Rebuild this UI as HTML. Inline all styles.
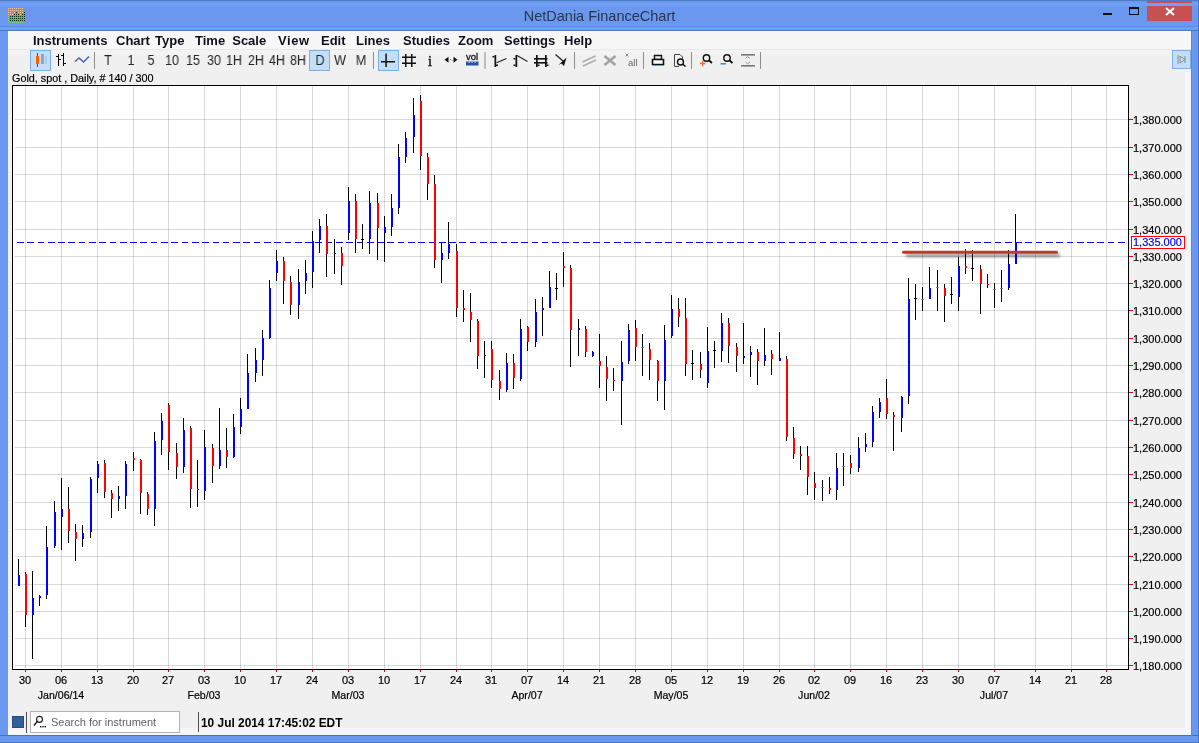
<!DOCTYPE html>
<html><head><meta charset="utf-8">
<style>
*{margin:0;padding:0;box-sizing:border-box}
html,body{width:1199px;height:743px;overflow:hidden;background:#6a98ee;font-family:"Liberation Sans",sans-serif;position:relative}
.abs{position:absolute}
#ttl,.mi,.tb,#info,.dl,.ml,.pl,.st{will-change:transform}
#info,.dl,.ml,.pl{-webkit-text-stroke-width:0.2px}
#ttl{position:absolute;left:0;width:1199px;top:8px;text-align:center;font-size:14.5px;color:#2a3550;white-space:nowrap}
.mi{position:absolute;top:32.5px;font-size:13px;font-weight:bold;color:#10101c;white-space:nowrap}
.tb{position:absolute;top:51.5px;font-size:14px;color:#262626;white-space:nowrap;transform:translateX(-50%) scaleX(0.9)}
#info{position:absolute;left:11.5px;top:72px;font-size:10.8px;color:#000;white-space:nowrap}
.dl{position:absolute;top:674px;width:40px;text-align:center;font-size:11px;color:#000}
.ml{position:absolute;top:689px;width:80px;text-align:center;font-size:10.6px;color:#000}
.pl{position:absolute;left:1133px;font-size:11px;color:#000;white-space:nowrap}
</style></head><body>
<!-- title bar -->
<div class="abs" style="left:0;top:0;width:1199px;height:1px;background:#4c7ac4"></div>
<svg class="abs" style="left:0;top:0" width="30" height="30"><rect x="8" y="8" width="1" height="1" fill="#f2c4a8"/><rect x="10" y="8" width="1" height="1" fill="#f2c4a8"/><rect x="12" y="8" width="1" height="1" fill="#f2c4a8"/><rect x="14" y="8" width="1" height="1" fill="#f2c4a8"/><rect x="16" y="8" width="1" height="1" fill="#f2c4a8"/><rect x="18" y="8" width="1" height="1" fill="#f2c4a8"/><rect x="20" y="8" width="1" height="1" fill="#f2c4a8"/><rect x="22" y="8" width="1" height="1" fill="#f2c4a8"/><rect x="8" y="10" width="1" height="1" fill="#f2c4a8"/><rect x="10" y="10" width="1" height="1" fill="#f2c4a8"/><rect x="12" y="10" width="1" height="1" fill="#f2c4a8"/><rect x="14" y="10" width="1" height="1" fill="#f2c4a8"/><rect x="16" y="10" width="1" height="1" fill="#f2c4a8"/><rect x="18" y="10" width="1" height="1" fill="#f2c4a8"/><rect x="20" y="10" width="1" height="1" fill="#f2c4a8"/><rect x="22" y="10" width="1" height="1" fill="#f2c4a8"/><rect x="8" y="12" width="1" height="1" fill="#f2c4a8"/><rect x="10" y="12" width="1" height="1" fill="#f2c4a8"/><rect x="12" y="12" width="1" height="1" fill="#f2c4a8"/><rect x="14" y="12" width="1" height="1" fill="#f2c4a8"/><rect x="16" y="12" width="1" height="1" fill="#0b2e18"/><rect x="18" y="12" width="1" height="1" fill="#f2c4a8"/><rect x="20" y="12" width="1" height="1" fill="#f2c4a8"/><rect x="22" y="12" width="1" height="1" fill="#f2c4a8"/><rect x="24" y="12" width="1" height="1" fill="#0b2e18"/><rect x="8" y="14" width="1" height="1" fill="#f2c4a8"/><rect x="10" y="14" width="1" height="1" fill="#f2c4a8"/><rect x="12" y="14" width="1" height="1" fill="#f2c4a8"/><rect x="14" y="14" width="1" height="1" fill="#0b2e18"/><rect x="16" y="14" width="1" height="1" fill="#0b2e18"/><rect x="18" y="14" width="1" height="1" fill="#0b2e18"/><rect x="20" y="14" width="1" height="1" fill="#f2c4a8"/><rect x="22" y="14" width="1" height="1" fill="#0b2e18"/><rect x="24" y="14" width="1" height="1" fill="#0b2e18"/><rect x="8" y="16" width="1" height="1" fill="#8fc89a"/><rect x="10" y="16" width="1" height="1" fill="#0b2e18"/><rect x="12" y="16" width="1" height="1" fill="#0b2e18"/><rect x="14" y="16" width="1" height="1" fill="#0b2e18"/><rect x="16" y="16" width="1" height="1" fill="#0b2e18"/><rect x="18" y="16" width="1" height="1" fill="#0b2e18"/><rect x="20" y="16" width="1" height="1" fill="#0b2e18"/><rect x="22" y="16" width="1" height="1" fill="#0b2e18"/><rect x="24" y="16" width="1" height="1" fill="#0b2e18"/><rect x="8" y="18" width="1" height="1" fill="#8fc89a"/><rect x="10" y="18" width="1" height="1" fill="#0b2e18"/><rect x="12" y="18" width="1" height="1" fill="#0b2e18"/><rect x="14" y="18" width="1" height="1" fill="#0b2e18"/><rect x="16" y="18" width="1" height="1" fill="#0b2e18"/><rect x="18" y="18" width="1" height="1" fill="#0b2e18"/><rect x="20" y="18" width="1" height="1" fill="#0b2e18"/><rect x="22" y="18" width="1" height="1" fill="#0b2e18"/><rect x="24" y="18" width="1" height="1" fill="#0b2e18"/><rect x="8" y="20" width="1" height="1" fill="#8fc89a"/><rect x="10" y="20" width="1" height="1" fill="#0b2e18"/><rect x="12" y="20" width="1" height="1" fill="#0b2e18"/><rect x="14" y="20" width="1" height="1" fill="#0b2e18"/><rect x="16" y="20" width="1" height="1" fill="#0b2e18"/><rect x="18" y="20" width="1" height="1" fill="#0b2e18"/><rect x="20" y="20" width="1" height="1" fill="#0b2e18"/><rect x="22" y="20" width="1" height="1" fill="#0b2e18"/><rect x="24" y="20" width="1" height="1" fill="#0b2e18"/><rect x="8" y="22" width="1" height="1" fill="#8fc89a"/><rect x="10" y="22" width="1" height="1" fill="#8fc89a"/><rect x="12" y="22" width="1" height="1" fill="#8fc89a"/><rect x="14" y="22" width="1" height="1" fill="#8fc89a"/><rect x="16" y="22" width="1" height="1" fill="#8fc89a"/><rect x="18" y="22" width="1" height="1" fill="#8fc89a"/><rect x="20" y="22" width="1" height="1" fill="#8fc89a"/><rect x="22" y="22" width="1" height="1" fill="#8fc89a"/></svg>
<div id="ttl">NetDania FinanceChart</div>
<div class="abs" style="left:1103px;top:13px;width:9px;height:2px;background:#111"></div>
<div class="abs" style="left:1129px;top:7px;width:10px;height:8px;border:1px solid #111;border-top-width:2px"></div>
<div class="abs" style="left:1147px;top:1px;width:45px;height:20px;background:#c75050"></div>
<svg class="abs" style="left:1165px;top:7px" width="10" height="9"><path d="M1 1L9 8M9 1L1 8" stroke="#fff" stroke-width="2"/></svg>
<!-- client -->
<div class="abs" style="left:0;top:3px;width:1199px;height:3px;background:#70a0f6"></div>
<div class="abs" style="left:0;top:26px;width:1199px;height:1px;background:#5c8ade"></div>
<div class="abs" style="left:0;top:27px;width:1199px;height:3px;background:#68a0f4"></div>
<div class="abs" style="left:0;top:30px;width:1199px;height:1px;background:#4c78c4"></div>
<div class="abs" style="left:8px;top:31px;width:1183px;height:704px;background:#f0f0f0"></div>
<div class="abs" style="left:8px;top:31px;width:1183px;height:18px;background:#f7f7f7"></div>
<div class="abs" style="left:8px;top:49px;width:1183px;height:1px;background:#e8e8e8"></div><div class="abs" style="left:8px;top:50px;width:1183px;height:5px;background:#f3f3f3"></div>
<div class="mi" style="left:33.2px">Instruments</div>
<div class="mi" style="left:115.7px;word-spacing:1.5px">Chart Type</div>
<div class="mi" style="left:195.1px;word-spacing:3.5px">Time Scale</div>
<div class="mi" style="left:277.7px;letter-spacing:0.6px">View</div>
<div class="mi" style="left:321.2px">Edit</div>
<div class="mi" style="left:356.2px">Lines</div>
<div class="mi" style="left:402.5px">Studies</div>
<div class="mi" style="left:457.6px">Zoom</div>
<div class="mi" style="left:504.4px">Settings</div>
<div class="mi" style="left:563.9px">Help</div>
<svg class="abs" style="left:0;top:0" width="1199" height="743" shape-rendering="geometricPrecision">
<!-- selected buttons -->
<rect x="30.5" y="50.5" width="20" height="20" fill="#c3def8" stroke="#7ab0e8"/>
<rect x="309.5" y="50.5" width="20" height="20" fill="#c3def8" stroke="#7ab0e8"/>
<rect x="378.5" y="50.5" width="20" height="20" fill="#c3def8" stroke="#7ab0e8"/>
<rect x="1172.5" y="50.5" width="18" height="18" fill="#c3def8" stroke="#7ab0e8"/>
<!-- candle icon -->
<g shape-rendering="crispEdges">
<rect x="37" y="53" width="1" height="14" fill="#6a3a50"/>
<rect x="36" y="56" width="3" height="8" fill="#ff6000"/>
<rect x="41" y="54" width="3" height="10" fill="#8aa6c4"/>
<rect x="45" y="56" width="2" height="8" fill="#b0cce6"/>
<rect x="41" y="65" width="7" height="1" fill="#c8e0d0"/>
</g>
<!-- bar icon -->
<g fill="#000" shape-rendering="crispEdges">
<rect x="58" y="54" width="1" height="12"/><rect x="56" y="56" width="2" height="1"/><rect x="59" y="59" width="2" height="1"/>
<rect x="63" y="53" width="1" height="13"/><rect x="61" y="55" width="2" height="1"/><rect x="64" y="63" width="2" height="1"/>
</g>
<polyline points="75,61.5 79,58 83.5,62 89,56.5" fill="none" stroke="#4a62c4" stroke-width="1.6"/>
<!-- separators -->
<g fill="#8c8c8c">
<rect x="94" y="52" width="1" height="17"/><rect x="373" y="52" width="1" height="17"/><rect x="484.5" y="52" width="1" height="17"/>
<rect x="574" y="52" width="1" height="17"/><rect x="643" y="52" width="1" height="17"/><rect x="691" y="52" width="1" height="17"/><rect x="760" y="52" width="1" height="17"/>
</g>
<!-- crosshair -->
<rect x="385.3" y="53.5" width="1.5" height="13.5" fill="#111"/>
<rect x="381" y="61" width="14" height="1.5" fill="#111"/>
<!-- grid -->
<g fill="#111">
<rect x="405" y="54" width="1.5" height="13"/><rect x="411" y="54" width="1.5" height="13"/>
<rect x="402" y="56.5" width="14" height="1.5"/><rect x="402" y="62.5" width="14" height="1.5"/>
</g>
<text x="430" y="65.5" font-family="Liberation Serif" font-size="14.5" text-anchor="middle" fill="#111" stroke="#111" stroke-width="0.4">i</text>
<path d="M444.5 59.7L448.5 56.7V62.7Z M457.5 59.7L453.5 56.7V62.7Z" fill="#111"/>
<rect x="450" y="59" width="1" height="1" fill="#888"/><rect x="451.5" y="60" width="1" height="1" fill="#888"/>
<text x="472" y="59.5" font-family="Liberation Sans" font-size="9.5" text-anchor="middle" fill="#111" stroke="#111" stroke-width="0.3">vol</text>
<path d="M466 61.5H478.5V65.5H466Z" fill="#2a4fa8"/>
<g fill="#e8eefc"><rect x="468.5" y="61.5" width="1" height="1.5"/><rect x="471.5" y="61.5" width="1" height="1.5"/><rect x="474.5" y="61.5" width="1" height="1.5"/></g>
<!-- trend icons -->
<g fill="#111">
<rect x="494.5" y="55" width="1.7" height="12"/><rect x="492.5" y="56" width="2" height="1.5"/><rect x="496" y="64.5" width="2" height="1.5"/>
<rect x="515.5" y="55" width="1.7" height="12"/><rect x="513.5" y="58" width="2" height="1.5"/><rect x="513.5" y="64.5" width="2" height="1.5"/>
<rect x="536" y="55" width="1.7" height="12"/><rect x="545" y="55" width="1.7" height="12"/>
<rect x="534" y="58" width="13.5" height="1.6"/><rect x="534" y="62" width="13.5" height="1.6"/>
<rect x="537.5" y="64.5" width="2" height="1.5"/><rect x="546.5" y="64.5" width="2" height="1.5"/>
</g>
<line x1="496.5" y1="62.7" x2="506.5" y2="58.5" stroke="#222" stroke-width="1.1"/>
<line x1="517" y1="55.5" x2="527.5" y2="61.5" stroke="#222" stroke-width="1.1"/>
<line x1="555.5" y1="54.5" x2="563" y2="61" stroke="#222" stroke-width="1.3"/>
<path d="M566.5 57.5L564 66L561.5 63.5L558.5 65Z" fill="#111"/>
<!-- gray icons -->
<line x1="582.5" y1="62" x2="595.5" y2="56" stroke="#adadad" stroke-width="1.6"/>
<line x1="583" y1="66" x2="596" y2="60" stroke="#adadad" stroke-width="1.6"/>
<path d="M604.5 56L615.5 65M615.5 56L604.5 65" stroke="#a3a3a3" stroke-width="2.6"/>
<path d="M625.5 53.5L628.5 56.5M628.5 53.5L625.5 56.5" stroke="#888" stroke-width="1"/>
<text x="628" y="66" font-family="Liberation Sans" font-size="9.5" fill="#666">all</text>
<!-- print -->
<path d="M654.5 55.5H661.5V59.5H654.5Z" fill="none" stroke="#111" stroke-width="1.4"/>
<path d="M652.5 59.5H663.5V64.5H652.5Z" fill="#fff" stroke="#111" stroke-width="1.6"/>
<rect x="653" y="65" width="11" height="1" fill="#6a9ad8"/>
<!-- preview -->
<path d="M674.5 54.5H680L682.5 57V60M674.5 54.5V66.5H679" fill="none" stroke="#444" stroke-width="1"/>
<circle cx="680.5" cy="62" r="3" fill="none" stroke="#111" stroke-width="1.4"/>
<line x1="682.5" y1="64" x2="685.5" y2="66.5" stroke="#111" stroke-width="1.6"/>
<!-- zoom in/out -->
<circle cx="706.5" cy="58" r="3.2" fill="none" stroke="#111" stroke-width="1.4"/>
<line x1="708.8" y1="60.3" x2="712" y2="63" stroke="#111" stroke-width="1.8"/>
<path d="M700 63.5H705.5M702.7 60.8V66.3" stroke="#f07020" stroke-width="1.5"/>
<circle cx="727" cy="58" r="3.2" fill="none" stroke="#111" stroke-width="1.4"/>
<line x1="729.3" y1="60.3" x2="732.5" y2="63" stroke="#111" stroke-width="1.8"/>
<path d="M720.5 63.8H726" stroke="#4a80d0" stroke-width="1.5"/>
<!-- fit -->
<rect x="741" y="54" width="14" height="1.6" fill="#777"/><rect x="741" y="65" width="14" height="1.6" fill="#777"/>
<path d="M745.5 58.5L747.7 56.5L750 58.5M745.5 62L747.7 64L750 62" fill="none" stroke="#999" stroke-width="1"/>
<!-- pin -->
<path d="M1178 55V64M1180 56L1185 59.5L1180 63Z M1185 56V63" fill="none" stroke="#8a8a8a" stroke-width="1"/>
</svg>
<div class="tb" style="left:108.3px">T</div>
<div class="tb" style="left:130.5px">1</div>
<div class="tb" style="left:150.7px">5</div>
<div class="tb" style="left:172px">10</div>
<div class="tb" style="left:193px">15</div>
<div class="tb" style="left:213.8px">30</div>
<div class="tb" style="left:234.4px">1H</div>
<div class="tb" style="left:255.8px">2H</div>
<div class="tb" style="left:276.8px">4H</div>
<div class="tb" style="left:297.5px">8H</div>
<div class="tb" style="left:319.6px">D</div>
<div class="tb" style="left:340.2px">W</div>
<div class="tb" style="left:361.3px">M</div>

<div id="info">Gold, spot , Daily, # 140 / 300</div>
<svg class="abs" style="left:0;top:0" width="1199" height="743" shape-rendering="crispEdges">
  <defs><filter id="blur" x="-10%" y="-200%" width="120%" height="500%"><feGaussianBlur stdDeviation="1.8"/></filter></defs>
  <rect x="12" y="85" width="1116" height="584" fill="#fff"/>
  <rect x="15" y="665" width="1113" height="1" fill="#000" fill-opacity="0.15"/><rect x="15" y="638" width="1113" height="1" fill="#000" fill-opacity="0.15"/><rect x="15" y="611" width="1113" height="1" fill="#000" fill-opacity="0.15"/><rect x="15" y="584" width="1113" height="1" fill="#000" fill-opacity="0.15"/><rect x="15" y="556" width="1113" height="1" fill="#000" fill-opacity="0.15"/><rect x="15" y="529" width="1113" height="1" fill="#000" fill-opacity="0.15"/><rect x="15" y="502" width="1113" height="1" fill="#000" fill-opacity="0.15"/><rect x="15" y="474" width="1113" height="1" fill="#000" fill-opacity="0.15"/><rect x="15" y="447" width="1113" height="1" fill="#000" fill-opacity="0.15"/><rect x="15" y="420" width="1113" height="1" fill="#000" fill-opacity="0.15"/><rect x="15" y="392" width="1113" height="1" fill="#000" fill-opacity="0.15"/><rect x="15" y="365" width="1113" height="1" fill="#000" fill-opacity="0.15"/><rect x="15" y="338" width="1113" height="1" fill="#000" fill-opacity="0.15"/><rect x="15" y="310" width="1113" height="1" fill="#000" fill-opacity="0.15"/><rect x="15" y="283" width="1113" height="1" fill="#000" fill-opacity="0.15"/><rect x="15" y="256" width="1113" height="1" fill="#000" fill-opacity="0.15"/><rect x="15" y="229" width="1113" height="1" fill="#000" fill-opacity="0.15"/><rect x="15" y="201" width="1113" height="1" fill="#000" fill-opacity="0.15"/><rect x="15" y="174" width="1113" height="1" fill="#000" fill-opacity="0.15"/><rect x="15" y="147" width="1113" height="1" fill="#000" fill-opacity="0.15"/><rect x="15" y="119" width="1113" height="1" fill="#000" fill-opacity="0.15"/><rect x="25" y="86" width="1" height="583" fill="#000" fill-opacity="0.15"/><rect x="61" y="86" width="1" height="583" fill="#000" fill-opacity="0.15"/><rect x="97" y="86" width="1" height="583" fill="#000" fill-opacity="0.15"/><rect x="133" y="86" width="1" height="583" fill="#000" fill-opacity="0.15"/><rect x="168" y="86" width="1" height="583" fill="#000" fill-opacity="0.15"/><rect x="204" y="86" width="1" height="583" fill="#000" fill-opacity="0.15"/><rect x="240" y="86" width="1" height="583" fill="#000" fill-opacity="0.15"/><rect x="276" y="86" width="1" height="583" fill="#000" fill-opacity="0.15"/><rect x="312" y="86" width="1" height="583" fill="#000" fill-opacity="0.15"/><rect x="348" y="86" width="1" height="583" fill="#000" fill-opacity="0.15"/><rect x="384" y="86" width="1" height="583" fill="#000" fill-opacity="0.15"/><rect x="420" y="86" width="1" height="583" fill="#000" fill-opacity="0.15"/><rect x="456" y="86" width="1" height="583" fill="#000" fill-opacity="0.15"/><rect x="491" y="86" width="1" height="583" fill="#000" fill-opacity="0.15"/><rect x="527" y="86" width="1" height="583" fill="#000" fill-opacity="0.15"/><rect x="563" y="86" width="1" height="583" fill="#000" fill-opacity="0.15"/><rect x="599" y="86" width="1" height="583" fill="#000" fill-opacity="0.15"/><rect x="635" y="86" width="1" height="583" fill="#000" fill-opacity="0.15"/><rect x="671" y="86" width="1" height="583" fill="#000" fill-opacity="0.15"/><rect x="707" y="86" width="1" height="583" fill="#000" fill-opacity="0.15"/><rect x="743" y="86" width="1" height="583" fill="#000" fill-opacity="0.15"/><rect x="779" y="86" width="1" height="583" fill="#000" fill-opacity="0.15"/><rect x="814" y="86" width="1" height="583" fill="#000" fill-opacity="0.15"/><rect x="850" y="86" width="1" height="583" fill="#000" fill-opacity="0.15"/><rect x="886" y="86" width="1" height="583" fill="#000" fill-opacity="0.15"/><rect x="922" y="86" width="1" height="583" fill="#000" fill-opacity="0.15"/><rect x="958" y="86" width="1" height="583" fill="#000" fill-opacity="0.15"/><rect x="994" y="86" width="1" height="583" fill="#000" fill-opacity="0.15"/><rect x="1035" y="86" width="1" height="583" fill="#000" fill-opacity="0.15"/><rect x="1071" y="86" width="1" height="583" fill="#000" fill-opacity="0.15"/><rect x="1106" y="86" width="1" height="583" fill="#000" fill-opacity="0.15"/><line x1="17" y1="242.5" x2="1125" y2="242.5" stroke="#0000ff" stroke-width="1" stroke-dasharray="6.7,3.59"/><rect x="18" y="559" width="1" height="27" fill="#000"/><rect x="18" y="575" width="2" height="11" fill="#0000ff"/><rect x="25" y="572" width="1" height="55" fill="#000"/><rect x="25" y="574" width="2" height="41" fill="#ff0000"/><rect x="32" y="571" width="1" height="88" fill="#000"/><rect x="32" y="598" width="2" height="17" fill="#0000ff"/><rect x="39" y="595" width="1" height="11" fill="#000"/><rect x="39" y="596" width="2" height="2" fill="#0000ff"/><rect x="46" y="526" width="1" height="73" fill="#000"/><rect x="46" y="547" width="2" height="48" fill="#0000ff"/><rect x="54" y="501" width="1" height="47" fill="#000"/><rect x="54" y="512" width="2" height="34" fill="#0000ff"/><rect x="61" y="478" width="1" height="72" fill="#000"/><rect x="61" y="509" width="2" height="8" fill="#0000ff"/><rect x="68" y="487" width="1" height="56" fill="#000"/><rect x="68" y="509" width="2" height="22" fill="#ff0000"/><rect x="75" y="524" width="1" height="37" fill="#000"/><rect x="75" y="532" width="2" height="7" fill="#ff0000"/><rect x="82" y="525" width="1" height="22" fill="#000"/><rect x="82" y="533" width="2" height="6" fill="#0000ff"/><rect x="90" y="477" width="1" height="61" fill="#000"/><rect x="90" y="479" width="2" height="53" fill="#0000ff"/><rect x="97" y="461" width="1" height="32" fill="#000"/><rect x="97" y="464" width="2" height="14" fill="#0000ff"/><rect x="104" y="460" width="1" height="38" fill="#000"/><rect x="104" y="463" width="2" height="29" fill="#ff0000"/><rect x="111" y="490" width="1" height="28" fill="#000"/><rect x="111" y="493" width="2" height="6" fill="#ff0000"/><rect x="118" y="486" width="1" height="25" fill="#000"/><rect x="118" y="496" width="2" height="3" fill="#0000ff"/><rect x="125" y="461" width="1" height="48" fill="#000"/><rect x="125" y="464" width="2" height="32" fill="#0000ff"/><rect x="133" y="452" width="1" height="19" fill="#000"/><rect x="133" y="458" width="2" height="2" fill="#ff0000"/><rect x="140" y="459" width="1" height="55" fill="#000"/><rect x="140" y="460" width="2" height="33" fill="#ff0000"/><rect x="147" y="492" width="1" height="23" fill="#000"/><rect x="147" y="494" width="2" height="15" fill="#ff0000"/><rect x="154" y="432" width="1" height="94" fill="#000"/><rect x="154" y="441" width="2" height="68" fill="#0000ff"/><rect x="161" y="413" width="1" height="42" fill="#000"/><rect x="161" y="421" width="2" height="19" fill="#0000ff"/><rect x="168" y="403" width="1" height="67" fill="#000"/><rect x="168" y="405" width="2" height="47" fill="#ff0000"/><rect x="176" y="443" width="1" height="36" fill="#000"/><rect x="176" y="453" width="2" height="14" fill="#ff0000"/><rect x="183" y="418" width="1" height="55" fill="#000"/><rect x="183" y="430" width="2" height="37" fill="#0000ff"/><rect x="190" y="426" width="1" height="82" fill="#000"/><rect x="190" y="428" width="2" height="61" fill="#ff0000"/><rect x="197" y="460" width="1" height="47" fill="#000"/><rect x="197" y="489" width="2" height="1" fill="#ff0000"/><rect x="204" y="430" width="1" height="70" fill="#000"/><rect x="204" y="447" width="2" height="44" fill="#0000ff"/><rect x="212" y="444" width="1" height="39" fill="#000"/><rect x="212" y="448" width="2" height="18" fill="#ff0000"/><rect x="219" y="408" width="1" height="61" fill="#000"/><rect x="219" y="450" width="2" height="16" fill="#0000ff"/><rect x="226" y="428" width="1" height="40" fill="#000"/><rect x="226" y="450" width="2" height="7" fill="#ff0000"/><rect x="233" y="414" width="1" height="44" fill="#000"/><rect x="233" y="427" width="2" height="30" fill="#0000ff"/><rect x="240" y="398" width="1" height="36" fill="#000"/><rect x="240" y="409" width="2" height="18" fill="#0000ff"/><rect x="247" y="354" width="1" height="55" fill="#000"/><rect x="247" y="373" width="2" height="36" fill="#0000ff"/><rect x="255" y="348" width="1" height="34" fill="#000"/><rect x="255" y="360" width="2" height="13" fill="#0000ff"/><rect x="262" y="330" width="1" height="46" fill="#000"/><rect x="262" y="338" width="2" height="22" fill="#0000ff"/><rect x="269" y="280" width="1" height="59" fill="#000"/><rect x="269" y="288" width="2" height="50" fill="#0000ff"/><rect x="276" y="250" width="1" height="31" fill="#000"/><rect x="276" y="261" width="2" height="12" fill="#0000ff"/><rect x="283" y="257" width="1" height="47" fill="#000"/><rect x="283" y="261" width="2" height="20" fill="#ff0000"/><rect x="290" y="276" width="1" height="39" fill="#000"/><rect x="290" y="282" width="2" height="23" fill="#ff0000"/><rect x="298" y="269" width="1" height="50" fill="#000"/><rect x="298" y="282" width="2" height="23" fill="#0000ff"/><rect x="305" y="260" width="1" height="34" fill="#000"/><rect x="305" y="273" width="2" height="8" fill="#0000ff"/><rect x="312" y="231" width="1" height="57" fill="#000"/><rect x="312" y="241" width="2" height="31" fill="#0000ff"/><rect x="319" y="219" width="1" height="34" fill="#000"/><rect x="319" y="226" width="2" height="14" fill="#0000ff"/><rect x="326" y="214" width="1" height="63" fill="#000"/><rect x="326" y="226" width="2" height="28" fill="#ff0000"/><rect x="334" y="239" width="1" height="35" fill="#000"/><rect x="334" y="253" width="2" height="1" fill="#0000ff"/><rect x="341" y="247" width="1" height="38" fill="#000"/><rect x="341" y="253" width="2" height="13" fill="#ff0000"/><rect x="348" y="187" width="1" height="53" fill="#000"/><rect x="348" y="201" width="2" height="32" fill="#0000ff"/><rect x="355" y="194" width="1" height="59" fill="#000"/><rect x="355" y="201" width="2" height="38" fill="#ff0000"/><rect x="362" y="224" width="1" height="25" fill="#000"/><rect x="361" y="239" width="3" height="1" fill="#000000"/><rect x="369" y="191" width="1" height="63" fill="#000"/><rect x="369" y="203" width="2" height="36" fill="#0000ff"/><rect x="377" y="193" width="1" height="67" fill="#000"/><rect x="377" y="203" width="2" height="25" fill="#ff0000"/><rect x="384" y="216" width="1" height="46" fill="#000"/><rect x="384" y="227" width="2" height="6" fill="#0000ff"/><rect x="391" y="194" width="1" height="42" fill="#000"/><rect x="391" y="208" width="2" height="19" fill="#0000ff"/><rect x="398" y="144" width="1" height="70" fill="#000"/><rect x="398" y="157" width="2" height="51" fill="#0000ff"/><rect x="405" y="132" width="1" height="31" fill="#000"/><rect x="405" y="138" width="2" height="19" fill="#0000ff"/><rect x="413" y="98" width="1" height="55" fill="#000"/><rect x="413" y="115" width="2" height="22" fill="#0000ff"/><rect x="420" y="95" width="1" height="75" fill="#000"/><rect x="420" y="101" width="2" height="55" fill="#ff0000"/><rect x="427" y="153" width="1" height="47" fill="#000"/><rect x="427" y="157" width="2" height="27" fill="#ff0000"/><rect x="434" y="175" width="1" height="93" fill="#000"/><rect x="434" y="184" width="2" height="76" fill="#ff0000"/><rect x="441" y="242" width="1" height="41" fill="#000"/><rect x="441" y="253" width="2" height="7" fill="#0000ff"/><rect x="448" y="222" width="1" height="37" fill="#000"/><rect x="448" y="244" width="2" height="9" fill="#0000ff"/><rect x="456" y="244" width="1" height="73" fill="#000"/><rect x="456" y="251" width="2" height="57" fill="#ff0000"/><rect x="463" y="290" width="1" height="32" fill="#000"/><rect x="463" y="308" width="2" height="2" fill="#ff0000"/><rect x="470" y="293" width="1" height="49" fill="#000"/><rect x="470" y="312" width="2" height="8" fill="#ff0000"/><rect x="477" y="319" width="1" height="50" fill="#000"/><rect x="477" y="321" width="2" height="35" fill="#ff0000"/><rect x="484" y="341" width="1" height="37" fill="#000"/><rect x="484" y="355" width="2" height="1" fill="#0000ff"/><rect x="491" y="341" width="1" height="47" fill="#000"/><rect x="491" y="349" width="2" height="31" fill="#ff0000"/><rect x="499" y="370" width="1" height="30" fill="#000"/><rect x="499" y="381" width="2" height="8" fill="#ff0000"/><rect x="506" y="353" width="1" height="39" fill="#000"/><rect x="506" y="363" width="2" height="27" fill="#0000ff"/><rect x="513" y="354" width="1" height="35" fill="#000"/><rect x="513" y="363" width="2" height="15" fill="#ff0000"/><rect x="520" y="319" width="1" height="62" fill="#000"/><rect x="520" y="329" width="2" height="50" fill="#0000ff"/><rect x="527" y="326" width="1" height="25" fill="#000"/><rect x="527" y="327" width="2" height="15" fill="#ff0000"/><rect x="535" y="299" width="1" height="48" fill="#000"/><rect x="535" y="312" width="2" height="30" fill="#0000ff"/><rect x="542" y="297" width="1" height="39" fill="#000"/><rect x="542" y="308" width="2" height="2" fill="#0000ff"/><rect x="549" y="271" width="1" height="37" fill="#000"/><rect x="549" y="287" width="2" height="21" fill="#0000ff"/><rect x="556" y="273" width="1" height="27" fill="#000"/><rect x="555" y="288" width="3" height="1" fill="#000000"/><rect x="563" y="252" width="1" height="35" fill="#000"/><rect x="563" y="266" width="2" height="2" fill="#ff0000"/><rect x="570" y="265" width="1" height="102" fill="#000"/><rect x="570" y="268" width="2" height="62" fill="#ff0000"/><rect x="578" y="319" width="1" height="37" fill="#000"/><rect x="578" y="328" width="2" height="2" fill="#0000ff"/><rect x="585" y="326" width="1" height="31" fill="#000"/><rect x="585" y="329" width="2" height="23" fill="#ff0000"/><rect x="592" y="351" width="1" height="6" fill="#000"/><rect x="592" y="352" width="2" height="4" fill="#0000ff"/><rect x="599" y="334" width="1" height="54" fill="#000"/><rect x="599" y="361" width="2" height="5" fill="#ff0000"/><rect x="606" y="356" width="1" height="45" fill="#000"/><rect x="606" y="367" width="2" height="12" fill="#ff0000"/><rect x="613" y="368" width="1" height="23" fill="#000"/><rect x="613" y="380" width="2" height="1" fill="#ff0000"/><rect x="621" y="341" width="1" height="84" fill="#000"/><rect x="621" y="362" width="2" height="19" fill="#0000ff"/><rect x="628" y="324" width="1" height="40" fill="#000"/><rect x="628" y="330" width="2" height="31" fill="#0000ff"/><rect x="635" y="320" width="1" height="41" fill="#000"/><rect x="635" y="328" width="2" height="19" fill="#ff0000"/><rect x="642" y="334" width="1" height="42" fill="#000"/><rect x="641" y="347" width="3" height="1" fill="#808080"/><rect x="649" y="343" width="1" height="37" fill="#000"/><rect x="649" y="349" width="2" height="11" fill="#ff0000"/><rect x="657" y="360" width="1" height="41" fill="#000"/><rect x="657" y="361" width="2" height="20" fill="#ff0000"/><rect x="664" y="325" width="1" height="85" fill="#000"/><rect x="664" y="340" width="2" height="41" fill="#0000ff"/><rect x="671" y="295" width="1" height="43" fill="#000"/><rect x="671" y="309" width="2" height="27" fill="#0000ff"/><rect x="678" y="298" width="1" height="29" fill="#000"/><rect x="678" y="309" width="2" height="8" fill="#ff0000"/><rect x="685" y="298" width="1" height="78" fill="#000"/><rect x="685" y="318" width="2" height="46" fill="#ff0000"/><rect x="692" y="350" width="1" height="30" fill="#000"/><rect x="691" y="363" width="3" height="1" fill="#000000"/><rect x="700" y="352" width="1" height="26" fill="#000"/><rect x="700" y="364" width="2" height="6" fill="#ff0000"/><rect x="707" y="327" width="1" height="61" fill="#000"/><rect x="707" y="351" width="2" height="32" fill="#0000ff"/><rect x="714" y="341" width="1" height="27" fill="#000"/><rect x="713" y="350" width="3" height="1" fill="#000000"/><rect x="721" y="313" width="1" height="49" fill="#000"/><rect x="721" y="323" width="2" height="28" fill="#0000ff"/><rect x="728" y="318" width="1" height="45" fill="#000"/><rect x="728" y="323" width="2" height="23" fill="#ff0000"/><rect x="736" y="343" width="1" height="29" fill="#000"/><rect x="736" y="347" width="2" height="9" fill="#ff0000"/><rect x="743" y="323" width="1" height="41" fill="#000"/><rect x="743" y="356" width="2" height="2" fill="#0000ff"/><rect x="750" y="346" width="1" height="31" fill="#000"/><rect x="750" y="352" width="2" height="3" fill="#0000ff"/><rect x="757" y="349" width="1" height="36" fill="#000"/><rect x="757" y="352" width="2" height="9" fill="#ff0000"/><rect x="764" y="328" width="1" height="38" fill="#000"/><rect x="764" y="355" width="2" height="6" fill="#0000ff"/><rect x="771" y="350" width="1" height="25" fill="#000"/><rect x="771" y="354" width="2" height="5" fill="#ff0000"/><rect x="779" y="332" width="1" height="29" fill="#000"/><rect x="779" y="358" width="2" height="3" fill="#0000ff"/><rect x="786" y="356" width="1" height="85" fill="#000"/><rect x="786" y="359" width="2" height="78" fill="#ff0000"/><rect x="793" y="427" width="1" height="32" fill="#000"/><rect x="793" y="438" width="2" height="16" fill="#ff0000"/><rect x="800" y="446" width="1" height="24" fill="#000"/><rect x="800" y="454" width="2" height="2" fill="#ff0000"/><rect x="807" y="446" width="1" height="49" fill="#000"/><rect x="807" y="456" width="2" height="21" fill="#ff0000"/><rect x="814" y="472" width="1" height="28" fill="#000"/><rect x="814" y="483" width="2" height="5" fill="#ff0000"/><rect x="822" y="480" width="1" height="21" fill="#000"/><rect x="821" y="487" width="3" height="1" fill="#808080"/><rect x="829" y="477" width="1" height="17" fill="#000"/><rect x="829" y="488" width="2" height="2" fill="#ff0000"/><rect x="836" y="453" width="1" height="47" fill="#000"/><rect x="836" y="468" width="2" height="22" fill="#0000ff"/><rect x="843" y="453" width="1" height="33" fill="#000"/><rect x="842" y="466" width="3" height="1" fill="#808080"/><rect x="850" y="455" width="1" height="19" fill="#000"/><rect x="850" y="463" width="2" height="5" fill="#ff0000"/><rect x="858" y="437" width="1" height="35" fill="#000"/><rect x="858" y="448" width="2" height="20" fill="#0000ff"/><rect x="865" y="433" width="1" height="19" fill="#000"/><rect x="865" y="444" width="2" height="3" fill="#0000ff"/><rect x="872" y="406" width="1" height="41" fill="#000"/><rect x="872" y="412" width="2" height="30" fill="#0000ff"/><rect x="879" y="398" width="1" height="20" fill="#000"/><rect x="879" y="402" width="2" height="10" fill="#0000ff"/><rect x="886" y="379" width="1" height="40" fill="#000"/><rect x="886" y="398" width="2" height="16" fill="#ff0000"/><rect x="893" y="412" width="1" height="39" fill="#000"/><rect x="893" y="415" width="2" height="2" fill="#ff0000"/><rect x="901" y="396" width="1" height="36" fill="#000"/><rect x="901" y="397" width="2" height="21" fill="#0000ff"/><rect x="908" y="278" width="1" height="126" fill="#000"/><rect x="908" y="299" width="2" height="97" fill="#0000ff"/><rect x="915" y="284" width="1" height="36" fill="#000"/><rect x="914" y="298" width="3" height="1" fill="#000000"/><rect x="922" y="287" width="1" height="24" fill="#000"/><rect x="921" y="299" width="3" height="1" fill="#808080"/><rect x="929" y="267" width="1" height="32" fill="#000"/><rect x="929" y="288" width="2" height="11" fill="#0000ff"/><rect x="937" y="270" width="1" height="41" fill="#000"/><rect x="936" y="287" width="3" height="1" fill="#808080"/><rect x="944" y="284" width="1" height="38" fill="#000"/><rect x="944" y="288" width="2" height="8" fill="#ff0000"/><rect x="951" y="277" width="1" height="27" fill="#000"/><rect x="950" y="294" width="3" height="1" fill="#000000"/><rect x="958" y="257" width="1" height="54" fill="#000"/><rect x="958" y="266" width="2" height="31" fill="#0000ff"/><rect x="965" y="249" width="1" height="25" fill="#000"/><rect x="965" y="266" width="2" height="2" fill="#ff0000"/><rect x="972" y="250" width="1" height="31" fill="#000"/><rect x="971" y="268" width="3" height="1" fill="#000000"/><rect x="980" y="265" width="1" height="49" fill="#000"/><rect x="980" y="269" width="2" height="15" fill="#ff0000"/><rect x="987" y="274" width="1" height="14" fill="#000"/><rect x="987" y="284" width="2" height="1" fill="#ff0000"/><rect x="994" y="283" width="1" height="25" fill="#000"/><rect x="993" y="289" width="3" height="1" fill="#808080"/><rect x="1001" y="270" width="1" height="32" fill="#000"/><rect x="1000" y="288" width="3" height="1" fill="#808080"/><rect x="1008" y="250" width="1" height="40" fill="#000"/><rect x="1008" y="264" width="2" height="24" fill="#0000ff"/><rect x="1015" y="214" width="1" height="50" fill="#000"/><rect x="1015" y="242" width="2" height="22" fill="#0000ff"/><rect x="906" y="254" width="154" height="3" fill="#000" opacity="0.45" filter="url(#blur)"/><line x1="903.5" y1="252.3" x2="1056.5" y2="252.3" stroke="#c0392b" stroke-width="3" stroke-linecap="round" shape-rendering="geometricPrecision"/><rect x="12.5" y="85.5" width="1116" height="584" fill="none" stroke="#000" stroke-width="1"/><rect x="25" y="670" width="1" height="2" fill="#e00000"/><rect x="61" y="670" width="1" height="2" fill="#e00000"/><rect x="97" y="670" width="1" height="2" fill="#e00000"/><rect x="133" y="670" width="1" height="2" fill="#e00000"/><rect x="168" y="670" width="1" height="2" fill="#e00000"/><rect x="204" y="670" width="1" height="2" fill="#e00000"/><rect x="240" y="670" width="1" height="2" fill="#e00000"/><rect x="276" y="670" width="1" height="2" fill="#e00000"/><rect x="312" y="670" width="1" height="2" fill="#e00000"/><rect x="348" y="670" width="1" height="2" fill="#e00000"/><rect x="384" y="670" width="1" height="2" fill="#e00000"/><rect x="420" y="670" width="1" height="2" fill="#e00000"/><rect x="456" y="670" width="1" height="2" fill="#e00000"/><rect x="491" y="670" width="1" height="2" fill="#e00000"/><rect x="527" y="670" width="1" height="2" fill="#e00000"/><rect x="563" y="670" width="1" height="2" fill="#e00000"/><rect x="599" y="670" width="1" height="2" fill="#e00000"/><rect x="635" y="670" width="1" height="2" fill="#e00000"/><rect x="671" y="670" width="1" height="2" fill="#e00000"/><rect x="707" y="670" width="1" height="2" fill="#e00000"/><rect x="743" y="670" width="1" height="2" fill="#e00000"/><rect x="779" y="670" width="1" height="2" fill="#e00000"/><rect x="814" y="670" width="1" height="2" fill="#e00000"/><rect x="850" y="670" width="1" height="2" fill="#e00000"/><rect x="886" y="670" width="1" height="2" fill="#e00000"/><rect x="922" y="670" width="1" height="2" fill="#e00000"/><rect x="958" y="670" width="1" height="2" fill="#e00000"/><rect x="994" y="670" width="1" height="2" fill="#e00000"/><rect x="1035" y="670" width="1" height="2" fill="#e00000"/><rect x="1071" y="670" width="1" height="2" fill="#e00000"/><rect x="1106" y="670" width="1" height="2" fill="#e00000"/><rect x="1129" y="665" width="4" height="1" fill="#e00000"/><rect x="1129" y="638" width="4" height="1" fill="#e00000"/><rect x="1129" y="611" width="4" height="1" fill="#e00000"/><rect x="1129" y="584" width="4" height="1" fill="#e00000"/><rect x="1129" y="556" width="4" height="1" fill="#e00000"/><rect x="1129" y="529" width="4" height="1" fill="#e00000"/><rect x="1129" y="502" width="4" height="1" fill="#e00000"/><rect x="1129" y="474" width="4" height="1" fill="#e00000"/><rect x="1129" y="447" width="4" height="1" fill="#e00000"/><rect x="1129" y="420" width="4" height="1" fill="#e00000"/><rect x="1129" y="392" width="4" height="1" fill="#e00000"/><rect x="1129" y="365" width="4" height="1" fill="#e00000"/><rect x="1129" y="338" width="4" height="1" fill="#e00000"/><rect x="1129" y="310" width="4" height="1" fill="#e00000"/><rect x="1129" y="283" width="4" height="1" fill="#e00000"/><rect x="1129" y="256" width="4" height="1" fill="#e00000"/><rect x="1129" y="229" width="4" height="1" fill="#e00000"/><rect x="1129" y="201" width="4" height="1" fill="#e00000"/><rect x="1129" y="174" width="4" height="1" fill="#e00000"/><rect x="1129" y="147" width="4" height="1" fill="#e00000"/><rect x="1129" y="119" width="4" height="1" fill="#e00000"/>
</svg>
<div class="dl" style="left:5.0px">30</div><div class="dl" style="left:41.0px">06</div><div class="dl" style="left:77.0px">13</div><div class="dl" style="left:113.0px">20</div><div class="dl" style="left:148.0px">27</div><div class="dl" style="left:184.0px">03</div><div class="dl" style="left:220.0px">10</div><div class="dl" style="left:256.0px">17</div><div class="dl" style="left:292.0px">24</div><div class="dl" style="left:328.0px">03</div><div class="dl" style="left:364.0px">10</div><div class="dl" style="left:400.0px">17</div><div class="dl" style="left:436.0px">24</div><div class="dl" style="left:471.0px">31</div><div class="dl" style="left:507.0px">07</div><div class="dl" style="left:543.0px">14</div><div class="dl" style="left:579.0px">21</div><div class="dl" style="left:615.0px">28</div><div class="dl" style="left:651.0px">05</div><div class="dl" style="left:687.0px">12</div><div class="dl" style="left:723.0px">19</div><div class="dl" style="left:759.0px">26</div><div class="dl" style="left:794.0px">02</div><div class="dl" style="left:830.0px">09</div><div class="dl" style="left:866.0px">16</div><div class="dl" style="left:902.0px">23</div><div class="dl" style="left:938.0px">30</div><div class="dl" style="left:974.0px">07</div><div class="dl" style="left:1015.0px">14</div><div class="dl" style="left:1051.0px">21</div><div class="dl" style="left:1086.0px">28</div>
<div class="ml" style="left:21.0px">Jan/06/14</div><div class="ml" style="left:164.0px">Feb/03</div><div class="ml" style="left:308.0px">Mar/03</div><div class="ml" style="left:487.0px">Apr/07</div><div class="ml" style="left:631.0px">May/05</div><div class="ml" style="left:774.0px">Jun/02</div><div class="ml" style="left:954.0px">Jul/07</div>
<div class="pl" style="top:660.0px">1,180.000</div><div class="pl" style="top:633.0px">1,190.000</div><div class="pl" style="top:606.0px">1,200.000</div><div class="pl" style="top:579.0px">1,210.000</div><div class="pl" style="top:551.0px">1,220.000</div><div class="pl" style="top:524.0px">1,230.000</div><div class="pl" style="top:497.0px">1,240.000</div><div class="pl" style="top:469.0px">1,250.000</div><div class="pl" style="top:442.0px">1,260.000</div><div class="pl" style="top:415.0px">1,270.000</div><div class="pl" style="top:387.0px">1,280.000</div><div class="pl" style="top:360.0px">1,290.000</div><div class="pl" style="top:333.0px">1,300.000</div><div class="pl" style="top:305.0px">1,310.000</div><div class="pl" style="top:278.0px">1,320.000</div><div class="pl" style="top:251.0px">1,330.000</div><div class="pl" style="top:224.0px">1,340.000</div><div class="pl" style="top:196.0px">1,350.000</div><div class="pl" style="top:169.0px">1,360.000</div><div class="pl" style="top:142.0px">1,370.000</div><div class="pl" style="top:114.0px">1,380.000</div>
<div class="abs" style="left:1131px;top:236px;width:54px;height:13px;border:1px solid #f00;background:#fff"></div>
<div class="pl" style="top:236px;color:#0000ff">1,335.000</div>
<!-- status bar -->
<div class="abs" style="left:8px;top:728px;width:1183px;height:7px;background:#f6f6f8"></div>
<div class="abs" style="left:12px;top:716px;width:12px;height:12px;background:#30609a;border:1px solid #244c7c"></div>
<div class="abs" style="left:26px;top:712px;width:1px;height:21px;background:#505050"></div>
<div class="abs" style="left:30px;top:711px;width:150px;height:22px;background:#fff;border:1px solid #b4b4b4"></div>
<svg class="abs" style="left:32px;top:713px" width="16" height="18">
  <circle cx="7.5" cy="6.3" r="3" fill="none" stroke="#222" stroke-width="1.2"/>
  <line x1="5.3" y1="8.6" x2="2" y2="12.4" stroke="#222" stroke-width="1.5"/>
  <rect x="8" y="13" width="1.4" height="1.4" fill="#111"/><rect x="10.3" y="13" width="1.4" height="1.4" fill="#111"/><rect x="12.6" y="13" width="1.4" height="1.4" fill="#111"/>
</svg>
<div class="abs st" style="left:50.5px;top:716px;font-size:11px;color:#5e5e68;white-space:nowrap">Search for instrument</div>
<div class="abs" style="left:198px;top:712px;width:1px;height:20px;background:#505050"></div>
<div class="abs st" style="left:201px;top:715.5px;font-size:11.9px;font-weight:bold;color:#000;white-space:nowrap">10 Jul 2014 17:45:02 EDT</div>
<div class="abs" style="left:1185px;top:72px;width:6px;height:663px;background:#f6f6f8"></div>
<div class="abs" style="left:0;top:735px;width:1199px;height:1px;background:#3f72c4"></div>
<div class="abs" style="left:1191px;top:31px;width:1px;height:705px;background:#5a88d8"></div>
<div class="abs" style="left:0;top:742px;width:1199px;height:1px;background:#4a78c8"></div>
<div class="abs" style="left:1198px;top:0;width:1px;height:743px;background:#4a78c8"></div>
</body></html>
